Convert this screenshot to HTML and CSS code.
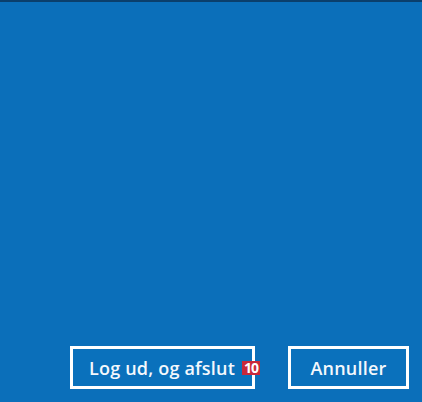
FILE: index.html
```html
<!DOCTYPE html>
<html lang="da">
    <head>
        <meta charset="UTF-8">
        <meta name="viewport" content="width=device-width, initial-scale=1.0">
        <title>Log ud</title>
        <link rel="stylesheet" href="styles.css">
    </head>
    <body>
        <div class="top-strip"></div>
        <div class="screen">
            <div class="actions">
                <button class="btn btn-primary">Log ud, og afslut<span class="badge">10</span></button>
                <button class="btn btn-cancel">Annuller</button>
            </div>
        </div>
    </body>
</html>
```

FILE: styles.css
```css
html, body {
    height: 100%;
}

body {
    margin: 0;
    background-color: #0b6fba;
    font-family: "Open Sans", "Noto Sans", sans-serif;
    display: flex;
    flex-direction: column;
    overflow: hidden;
}

.top-strip {
    height: 2px;
    background-color: #0b3f6c;
}

.screen {
    flex: 1;
    display: flex;
    flex-direction: column;
    justify-content: flex-end;
    padding: 0 13px 13px 0;
}

.actions {
    display: flex;
    justify-content: flex-end;
    gap: 33px;
}

.btn {
    position: relative;
    height: 43px;
    box-sizing: border-box;
    border: 3px solid #ffffff;
    background-color: #0a71bc;
    color: #f4f8fc;
    font-family: inherit;
    font-size: 18px;
    font-weight: 600;
    letter-spacing: 0.2px;
    padding: 0;
    cursor: pointer;
}

.btn-primary {
    width: 185px;
    text-align: left;
    padding-left: 16px;
}

.btn-cancel {
    width: 121px;
}

.badge {
    position: absolute;
    left: 169px;
    top: 12px;
    width: 18px;
    height: 14px;
    background-color: #c8283a;
    color: #ffffff;
    font-size: 14px;
    font-weight: 700;
    line-height: 14px;
    text-align: center;
    letter-spacing: -1px;
}
```
